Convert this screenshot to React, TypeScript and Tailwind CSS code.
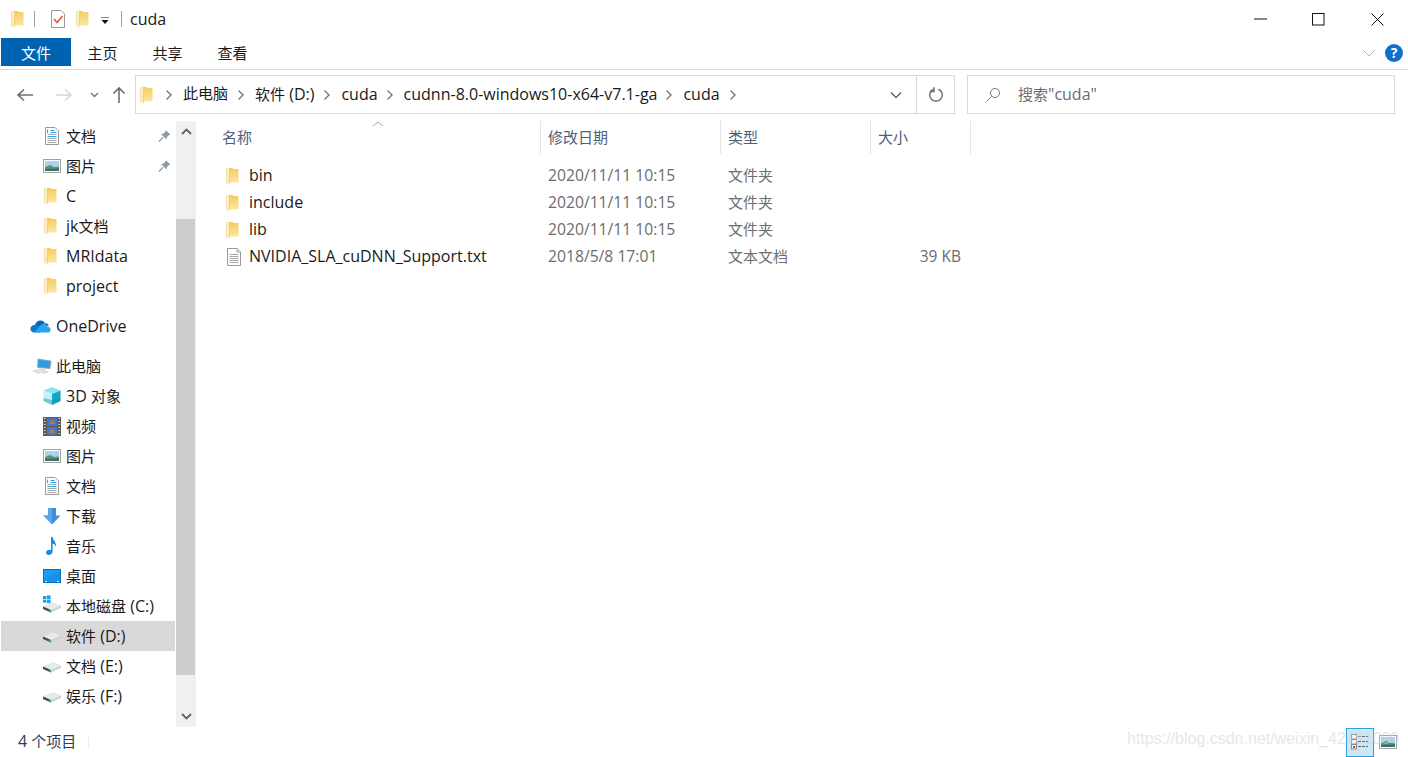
import React from "react";

const FONT = '"Open Sans","Noto Sans CJK SC",sans-serif';

function Txt({ children }: { children: string }) {
  const parts = children.split(/([\u4e00-\u9fff]+)/).filter(Boolean);
  return (
    <>
      {parts.map((p, i) =>
        /[\u4e00-\u9fff]/.test(p) ? (
          <span key={i}>{p}</span>
        ) : (
          <span key={i} className="text-[16px]">
            {p}
          </span>
        ),
      )}
    </>
  );
}

function Folder({ className = "" }: { className?: string }) {
  const id = React.useId();
  return (
    <svg width="13" height="18" viewBox="0 0 13 18" className={className}>
      <defs>
        <linearGradient id={id} x1="0" y1="0" x2="0" y2="1">
          <stop offset="0" stopColor="#f3cb62" />
          <stop offset="1" stopColor="#fde6a0" />
        </linearGradient>
      </defs>
      <path d="M4 1 H7 V2 H12.5 V15.5 H4Z" fill={`url(#${id})`} />
      <path d="M.5 1.2 L3.6 .4 V15.5 H4 L3.6 17.6 L.5 16.5Z" fill="#fdeebb" />
      <path d="M3.5 .6 V15.8" stroke="#e9c566" strokeWidth=".8" />
      <path d="M.5 1.2 V16.5" stroke="#eed48a" strokeWidth=".6" />
    </svg>
  );
}

function TextDoc({ size = 18 }: { size?: number }) {
  return (
    <svg width={size} height={size} viewBox="0 0 18 18">
      <path d="M2.5 .5H12L15.5 4V17.5H2.5Z" fill="#fff" stroke="#9a9a9a" />
      <path d="M12 .5V4H15.5" fill="#eee" stroke="#9a9a9a" />
      <path d="M4.5 6.5H13.5M4.5 8.5H13.5M4.5 10.5H13.5M4.5 12.5H13.5M4.5 14.5H13.5" stroke="#a8a8a8" />
    </svg>
  );
}

function DocBlue() {
  return (
    <svg width="16" height="18" viewBox="0 0 16 18">
      <path d="M1.5 .5H11L14.5 4V17.5H1.5Z" fill="#fff" stroke="#9a9a9a" />
      <path d="M3.5 7.5H12.5M3.5 11.5H12.5M3.5 13.5H12.5M3.5 15.5H12.5" stroke="#a8a8a8" />
      <path d="M6.5 3.5H10.5M6.5 5.5H12.5M3.5 9.5H12.5" stroke="#2ea3e8" />
      <path d="M3.5 2.5V6" stroke="#2ea3e8" />
    </svg>
  );
}

function Picture() {
  return (
    <svg width="18" height="14" viewBox="0 0 18 14">
      <rect x=".5" y=".5" width="17" height="13" fill="#fff" stroke="#a3a3a3" />
      <rect x="2" y="2" width="14" height="10" fill="#a9d4ef" />
      <path d="M2 8 L7 6 L11 8 L16 7.5 V12 H2Z" fill="#5e8f7c" />
      <path d="M2 10 L16 9.5 V12 H2Z" fill="#3e6e68" />
    </svg>
  );
}

function Pin() {
  return (
    <svg width="13" height="14" viewBox="0 0 14 14">
      <path d="M8.5 .8 L13.2 5.5 L11.6 6.2 L9.5 8.3 L9.2 10.8 L3.2 4.8 L5.7 4.5 L7.8 2.4Z" fill="#8d9aa5" />
      <path d="M5.5 8.5 L1 13" stroke="#8d9aa5" strokeWidth="1.4" />
    </svg>
  );
}

function OneDrive() {
  return (
    <svg width="21" height="14" viewBox="0 0 21 14">
      <path d="M5 6 C6 1.5 12 -.5 15 4 L8 9Z" fill="#0a64b8" />
      <path d="M15 4 C18 4 19 6 18.5 7 L11 9Z" fill="#1b8ad8" />
      <path d="M6 6 C2 5.5 0 8 .5 10.5 C1 12.5 2.5 13.5 4 13.5 L10 13.5 L12 9Z" fill="#0f78d0" />
      <path d="M9 8 C12 3.5 16 5 16.5 7.5 C19.5 7 21 9.5 20.5 11.5 C20 13 19 13.5 18 13.5 H4 Z" fill="#2aa5ea" />
    </svg>
  );
}

function ThisPC() {
  return (
    <svg width="20" height="17" viewBox="0 0 20 17">
      <path d="M6 1 L19 3 L18 10.5 L5.5 9.5Z" fill="#3ea9ea" stroke="#8a97a3" strokeWidth=".7" />
      <path d="M7 2.2 L17.8 3.9 L17 9.6 L6.7 8.7Z" fill="#2f9be4" />
      <path d="M1 13 L9 10.8 L14 12.6 L6 15.5Z" fill="#dfe3e6" stroke="#c3c7ca" strokeWidth=".5" />
      <path d="M10 14.5 L15 13 L17 14 L12 16Z" fill="#d3d7da" />
    </svg>
  );
}

function Cube() {
  return (
    <svg width="18" height="18" viewBox="0 0 18 18">
      <path d="M9 0 L17.5 3.5 L9 7 L.5 3.5Z" fill="#8be7ef" />
      <path d="M.5 3.5 L9 7 V18 L.5 14Z" fill="#c5f1f4" />
      <path d="M17.5 3.5 V14 L9 18 V7Z" fill="#17a6c3" />
      <path d="M.5 11 L9 13 L17.5 11 V14 L9 18 L.5 14Z" fill="#0f93ad" opacity=".45" />
    </svg>
  );
}

function Film() {
  return (
    <svg width="18" height="19" viewBox="0 0 18 19">
      <rect x="0" y="0" width="18" height="19" fill="#5a5a5a" />
      <path d="M1 1.5H2.5M1 4.5H2.5M1 7.5H2.5M1 10.5H2.5M1 13.5H2.5M1 16.5H2.5M15.5 1.5H17M15.5 4.5H17M15.5 7.5H17M15.5 10.5H17M15.5 13.5H17M15.5 16.5H17" stroke="#e0e0e0" strokeWidth="1.2" />
      <rect x="4" y="1" width="10" height="8" fill="#3f79c9" />
      <rect x="4" y="10" width="10" height="8" fill="#3f79c9" />
      <path d="M6 7 L8 3.5 L11 3.5 L12.5 7Z" fill="#c9742d" />
      <path d="M6 16 L8 12.5 L11 12.5 L12.5 16Z" fill="#c9742d" />
    </svg>
  );
}

function Download() {
  return (
    <svg width="18" height="17" viewBox="0 0 18 17">
      <path d="M5 0 H13 V7.5 H17.5 L9 16.5 L.5 7.5 H5Z" fill="#3b8fdd" />
      <path d="M5 0 H9 V16.5 L.5 7.5 H5Z" fill="#5aa6e6" />
    </svg>
  );
}

function Music() {
  return (
    <svg width="12" height="18" viewBox="0 0 12 18">
      <path d="M5 0 H6.6 C7 3 10.5 5 10 10 C9.5 8 8 6.8 6.6 6.5 V14.5 C6.6 16.5 4.8 18 2.8 18 C1 18 0 17 0 15.6 C0 14 1.8 12.8 3.5 12.8 C4 12.8 4.6 13 5 13.2Z" fill="#0f8fe6" />
    </svg>
  );
}

function Desktop() {
  return (
    <svg width="18" height="14" viewBox="0 0 18 14">
      <rect x=".5" y=".5" width="17" height="13" fill="#1b9bf0" stroke="#0a6fc2" />
      <path d="M1 11.5 L17 2 V13 H1Z" fill="#0f84de" opacity=".5" />
      <path d="M2 12.5H4M14 12.5H16" stroke="#cfeaff" />
    </svg>
  );
}

function Drive({ win = false }: { win?: boolean }) {
  return (
    <svg width="18" height="16" viewBox="0 0 18 16" className="overflow-visible">
      {win && (
        <g fill="#1aa3ec">
          <rect x="0" y="-2" width="3.4" height="3" />
          <rect x="4" y="-2.6" width="3.6" height="3.6" />
          <rect x="0" y="1.6" width="3.4" height="3" />
          <rect x="4" y="1.6" width="3.6" height="3.6" />
        </g>
      )}
      <path d="M0 8.5 L10 4.5 L18 7.5 V10 L8 14.5 L0 11Z" fill="#cfd2d2" />
      <path d="M0 8.5 L10 4.5 L18 7.5 L8 12Z" fill="#e8eaea" />
      <path d="M0 8.5 L8 12 V14.5 L0 11Z" fill="#4a4a4a" />
      <rect x="6" y="12" width="2" height="1.6" fill="#2fc14f" />
    </svg>
  );
}

type Item = { label: string; icon: React.ReactNode; pin?: boolean; sel?: boolean };

const navFolder = <Folder className="-ml-[3px]" />;

const quick: Item[] = [
  { label: "文档", icon: <DocBlue />, pin: true },
  { label: "图片", icon: <Picture />, pin: true },
  { label: "C", icon: navFolder },
  { label: "jk文档", icon: navFolder },
  { label: "MRIdata", icon: navFolder },
  { label: "project", icon: navFolder },
];
const pc: Item[] = [
  { label: "3D 对象", icon: <Cube /> },
  { label: "视频", icon: <Film /> },
  { label: "图片", icon: <Picture /> },
  { label: "文档", icon: <DocBlue /> },
  { label: "下载", icon: <Download /> },
  { label: "音乐", icon: <Music /> },
  { label: "桌面", icon: <Desktop /> },
  { label: "本地磁盘 (C:)", icon: <Drive win /> },
  { label: "软件 (D:)", icon: <Drive />, sel: true },
  { label: "文档 (E:)", icon: <Drive /> },
  { label: "娱乐 (F:)", icon: <Drive /> },
];

function NavRow({ item }: { item: Item }) {
  return (
    <div className={`flex h-[30px] items-center pr-[3px] ${item.sel ? "bg-[#d9d9d9]" : ""}`}>
      <div className="ml-[41px] flex w-[20px] justify-center">{item.icon}</div>
      <span className="ml-[4px] whitespace-nowrap text-[15px] leading-none text-[#1a1a1a]">
        <Txt>{item.label}</Txt>
      </span>
      {item.pin && (
        <span className="ml-auto mr-[1px] flex">
          <Pin />
        </span>
      )}
    </div>
  );
}

const rows = [
  { name: "bin", date: "2020/11/11 10:15", type: "文件夹", size: "", icon: navFolder },
  { name: "include", date: "2020/11/11 10:15", type: "文件夹", size: "", icon: navFolder },
  { name: "lib", date: "2020/11/11 10:15", type: "文件夹", size: "", icon: navFolder },
  { name: "NVIDIA_SLA_cuDNN_Support.txt", date: "2018/5/8 17:01", type: "文本文档", size: "39 KB", icon: <TextDoc size={18} /> },
];

const cols = [
  { label: "名称", w: "w-[341px] pl-[22px]" },
  { label: "修改日期", w: "w-[180px] pl-[7px]" },
  { label: "类型", w: "w-[150px] pl-[7px]" },
  { label: "大小", w: "w-[100px] pl-[7px]" },
];

function Crumb({ label, tight = false }: { label: string; tight?: boolean }) {
  return (
    <>
      <span className="whitespace-nowrap pb-[2px] text-[15px] leading-none text-[#1a1a1a]">
        <Txt>{label}</Txt>
      </span>
      <svg width="8" height="12" viewBox="0 0 8 12" className={`mr-[10px] ${tight ? "ml-[8px]" : "ml-[9px]"}`}>
        <path d="M1.5 1.5 L6 6 L1.5 10.5" fill="none" stroke="#777" strokeWidth="1.4" />
      </svg>
    </>
  );
}

export default function App() {
  return (
    <div className="relative flex h-[757px] w-[1408px] flex-col overflow-hidden bg-white" style={{ fontFamily: FONT }}>
      {/* title bar */}
      <div className="flex h-[38px] shrink-0 items-center">
        <Folder className="ml-[11px]" />
        <div className="ml-[10px] h-[16px] w-px bg-[#a0a0a0]" />
        <svg width="16" height="18" viewBox="0 0 16 18" className="ml-[15px]">
          <path d="M1.5 .5H11L14.5 4V17.5H1.5Z" fill="#fff" stroke="#9a9a9a" />
          <path d="M4 9 L7 12.5 L12.5 6" fill="none" stroke="#e8552a" strokeWidth="1.6" />
        </svg>
        <Folder className="ml-[10px]" />
        <svg width="8" height="8" viewBox="0 0 8 8" className="ml-[12px] mt-[3px]">
          <path d="M0 0H8" stroke="#111" />
          <path d="M.5 3H7.5L4 7Z" fill="#111" />
        </svg>
        <div className="ml-[12px] h-[16px] w-px bg-[#a0a0a0]" />
        <span className="ml-[8px] text-[16px] leading-none text-[#1a1a1a]">cuda</span>
        <div className="ml-auto flex items-center">
          <svg width="13" height="2" viewBox="0 0 13 2" className="mr-[45px]">
            <path d="M0 1H13" stroke="#111" />
          </svg>
          <svg width="13" height="13" viewBox="0 0 13 13" className="mr-[46px]">
            <rect x=".5" y=".5" width="11.5" height="11.5" fill="none" stroke="#111" />
          </svg>
          <svg width="13" height="13" viewBox="0 0 13 13" className="mr-[24px]">
            <path d="M.5 .5L12.5 12.5M12.5 .5L.5 12.5" stroke="#111" />
          </svg>
        </div>
      </div>

      {/* ribbon tabs */}
      <div className="flex h-[32px] shrink-0 items-start border-b border-[#dadada] pl-px">
        <div className="flex h-[28px] w-[70px] items-center justify-center bg-[#0063b1] pt-[2px] text-[15px] leading-none text-white">文件</div>
        {["主页", "共享", "查看"].map((t) => (
          <div key={t} className="-ml-px mr-px flex h-[28px] w-[65px] items-center justify-center pt-[2px] text-[15px] leading-none text-[#1a1a1a]">
            {t}
          </div>
        ))}
        <div className="ml-auto mr-[5px] flex h-[28px] items-center pt-[2px]">
          <svg width="14" height="8" viewBox="0 0 14 8" className="mr-[9px]">
            <path d="M1 1L7 7L13 1" fill="none" stroke="#b8b8b8" />
          </svg>
          <div className="flex h-[18px] w-[18px] items-center justify-center rounded-full bg-[#0f70cc] text-[14px] font-bold leading-none text-white">?</div>
        </div>
      </div>

      {/* address row */}
      <div className="flex h-[49px] shrink-0 items-start pt-[5px]">
        <div className="flex h-[39px] items-center">
          <svg width="18" height="14" viewBox="0 0 18 14" className="ml-[16px]">
            <path d="M8 1.5L2 7L8 12.5M2 7H17" fill="none" stroke="#6f6f6f" strokeWidth="1.6" />
          </svg>
          <svg width="18" height="14" viewBox="0 0 18 14" className="ml-[21px]">
            <path d="M10 1.5L16 7L10 12.5M16 7H1" fill="none" stroke="#d5d5d5" strokeWidth="1.6" />
          </svg>
          <svg width="9" height="6" viewBox="0 0 9 6" className="ml-[17px]">
            <path d="M1 1L4.5 4.5L8 1" fill="none" stroke="#777" strokeWidth="1.4" />
          </svg>
          <svg width="14" height="17" viewBox="0 0 14 17" className="ml-[13px]">
            <path d="M1.5 7.5L7 2L12.5 7.5M7 2V17" fill="none" stroke="#6f6f6f" strokeWidth="1.6" />
          </svg>
        </div>
        <div className="ml-[9px] flex h-[39px] w-[820px] items-center border border-[#d9d9d9]">
          <Folder className="ml-[4px]" />
          <svg width="8" height="12" viewBox="0 0 8 12" className="ml-[12px] mr-[10px]">
            <path d="M1.5 1.5 L6 6 L1.5 10.5" fill="none" stroke="#777" strokeWidth="1.4" />
          </svg>
          <Crumb label="此电脑" />
          <Crumb label="软件 (D:)" />
          <Crumb label="cuda" tight />
          <Crumb label="cudnn-8.0-windows10-x64-v7.1-ga" tight />
          <Crumb label="cuda" />
          <div className="ml-auto flex h-full items-center">
            <svg width="12" height="8" viewBox="0 0 12 8" className="mr-[14px]">
              <path d="M1 1.5L6 6.5L11 1.5" fill="none" stroke="#666" strokeWidth="1.5" />
            </svg>
            <div className="flex h-full w-[38px] items-center justify-center border-l border-[#d9d9d9]">
              <svg width="16" height="16" viewBox="0 0 16 16">
                <path d="M10.5 2.2A6.3 6.3 0 1 1 5.5 2.2" fill="none" stroke="#6f6f6f" strokeWidth="1.5" />
                <path d="M5 .2V4.5H.8" fill="none" stroke="#6f6f6f" strokeWidth="1.5" transform="translate(1 0)" />
              </svg>
            </div>
          </div>
        </div>
        <div className="ml-[12px] flex h-[39px] w-[428px] items-center border border-[#d9d9d9]">
          <svg width="16" height="16" viewBox="0 0 16 16" className="ml-[17px]">
            <circle cx="10" cy="6" r="4.5" fill="none" stroke="#7a7a7a" />
            <path d="M6.7 9.3L1.5 14.5" stroke="#7a7a7a" />
          </svg>
          <span className="ml-[17px] whitespace-nowrap pb-[2px] text-[15px] leading-none text-[#6d6d6d]">
            <Txt>搜索"cuda"</Txt>
          </span>
        </div>
      </div>

      {/* main */}
      <div className="flex min-h-0 flex-1 pt-[2px]">
        <div className="flex w-[175px] shrink-0 flex-col pl-px">
          {quick.map((i) => (
            <NavRow key={i.label + "q"} item={i} />
          ))}
          <div className="mt-[10px] flex h-[30px] items-center">
            <div className="ml-[29px] flex w-[21px] justify-center">
              <OneDrive />
            </div>
            <span className="ml-[5px] text-[16px] leading-none text-[#1a1a1a]">OneDrive</span>
          </div>
          <div className="mt-[10px] flex h-[30px] items-center">
            <div className="ml-[31px] flex w-[20px] justify-center">
              <ThisPC />
            </div>
            <span className="ml-[4px] text-[15px] leading-none text-[#1a1a1a]">此电脑</span>
          </div>
          {pc.map((i) => (
            <NavRow key={i.label + "p"} item={i} />
          ))}
        </div>

        {/* scrollbar */}
        <div className="ml-px flex h-[606px] w-[20px] shrink-0 flex-col bg-[#f0f0f0]">
          <div className="flex h-[98px] justify-center pt-[7px]">
            <svg width="11" height="7" viewBox="0 0 11 7">
              <path d="M1 6L5.5 1.5L10 6" fill="none" stroke="#606060" strokeWidth="1.8" />
            </svg>
          </div>
          <div className="h-[456px] w-[19px] bg-[#cdcdcd]" />
          <div className="flex flex-1 items-end justify-center pb-[7px]">
            <svg width="11" height="7" viewBox="0 0 11 7">
              <path d="M1 1L5.5 5.5L10 1" fill="none" stroke="#606060" strokeWidth="1.8" />
            </svg>
          </div>
        </div>

        {/* list */}
        <div className="relative flex min-w-0 flex-1 flex-col">
          <svg width="12" height="6" viewBox="0 0 12 6" className="absolute left-[176px] top-[0px]">
            <path d="M1 5L6 1L11 5" fill="none" stroke="#a8a8a8" />
          </svg>
          <div className="ml-[4px] flex h-[33px] shrink-0">
            {cols.map((c) => (
              <div key={c.label} className={`flex items-center border-r border-[#e5e5e5] text-[15px] leading-none text-[#4c607a] ${c.w}`}>
                {c.label}
              </div>
            ))}
          </div>
          <div className="ml-[4px] mt-[8px] flex flex-col">
            {rows.map((r) => (
              <div key={r.name} className="flex h-[27px] items-center">
                <div className="flex w-[341px] items-center">
                  <div className="ml-[24px] flex w-[20px] justify-center">{r.icon}</div>
                  <span className="ml-[5px] whitespace-nowrap pb-[2px] text-[16px] leading-none text-[#1a1a1a]">{r.name}</span>
                </div>
                <span className="w-[180px] pl-[7px] text-[15.7px] leading-none text-[#6d6d6d]">{r.date}</span>
                <span className="w-[150px] pl-[7px] text-[15px] leading-none text-[#6d6d6d]">{r.type}</span>
                <span className="w-[90px] text-right text-[15.5px] leading-none text-[#6d6d6d]">{r.size}</span>
              </div>
            ))}
          </div>
        </div>
      </div>

      {/* status bar */}
      <div className="flex h-[30px] shrink-0 items-center">
        <span className="ml-[18px] whitespace-nowrap pb-[2px] text-[15px] leading-none text-[#2c3e5a]">
          <Txt>4 个项目</Txt>
        </span>
        <div className="ml-[12px] h-[14px] w-px bg-[#eeeeee]" />
        <div className="ml-auto mr-[11px] flex items-center">
          <div className="flex h-[29px] w-[28px] items-center justify-center border border-[#2ba3de] bg-[#cce8f6]">
            <svg width="18" height="16" viewBox="0 0 18 16">
              <rect x=".5" y=".5" width="5" height="4.5" fill="#fff" stroke="#8a8a8a" />
              <rect x=".5" y="5.5" width="5" height="4.5" fill="#fff" stroke="#8a8a8a" />
              <rect x=".5" y="10.5" width="5" height="4.5" fill="#fff" stroke="#8a8a8a" />
              <rect x="2" y="12" width="2.2" height="2" fill="#d33" />
              <path d="M7 2.5H17M7 7.5H17M7 12.5H17" stroke="#666" strokeDasharray="3 1" />
            </svg>
          </div>
          <span className="ml-[5px] flex">
            <Picture />
          </span>
        </div>
      </div>

      {/* watermark */}
      <div className="pointer-events-none absolute left-[1127px] top-[727px] whitespace-nowrap text-[16px] leading-[24px] text-[#d0d0d0] opacity-50" style={{ fontFamily: '"Liberation Sans",sans-serif' }}>
        https://blog.csdn.net/weixin_42461090
      </div>
    </div>
  );
}
